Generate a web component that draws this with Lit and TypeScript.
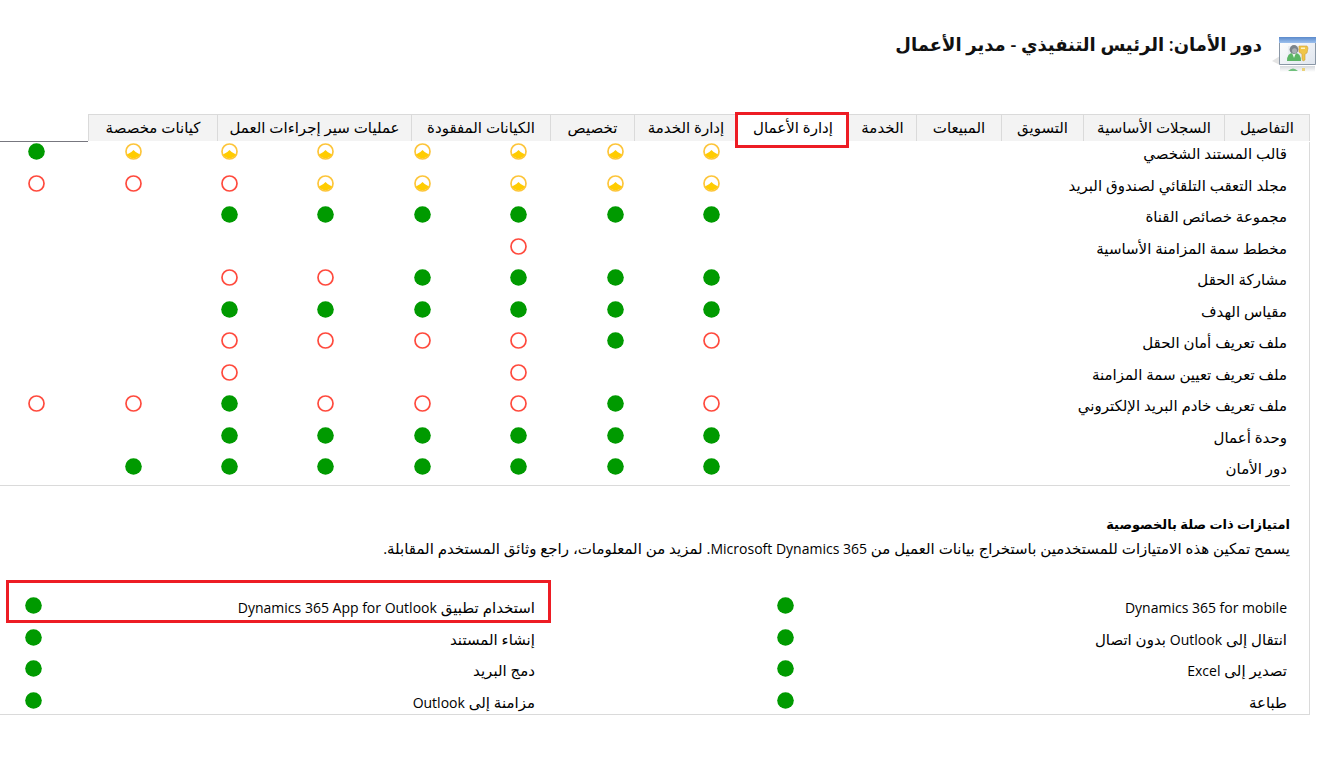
import { LitElement, html, css, svg, nothing } from "lit";
import { customElement, property, state } from "lit/decorators.js";
import { classMap } from "lit/directives/class-map.js";

type Level = "full" | "user" | "none";

const LEVEL_LABELS: Record<Level, string> = {
  full: "المؤسسة",
  user: "المستخدم",
  none: "بلا تحديد",
};

const LEVEL_CODES: Record<string, Level> = { g: "full", y: "user", r: "none" };

const TABS = [
  "التفاصيل",
  "السجلات الأساسية",
  "التسويق",
  "المبيعات",
  "الخدمة",
  "إدارة الأعمال",
  "إدارة الخدمة",
  "تخصيص",
  "الكيانات المفقودة",
  "عمليات سير إجراءات العمل",
  "كيانات مخصصة",
];

/* One letter per privilege column: g full, y user, r none, - not applicable. */
const ENTITIES: Array<[string, string]> = [
  ["قالب المستند الشخصي", "yyyyyyyg"],
  ["مجلد التعقب التلقائي لصندوق البريد", "yyyyyrrr"],
  ["مجموعة خصائص القناة", "gggggg--"],
  ["مخطط سمة المزامنة الأساسية", "--r-----"],
  ["مشاركة الحقل", "ggggrr--"],
  ["مقياس الهدف", "gggggg--"],
  ["ملف تعريف أمان الحقل", "rgrrrr--"],
  ["ملف تعريف تعيين سمة المزامنة", "--r--r--"],
  ["ملف تعريف خادم البريد الإلكتروني", "rgrrrgrr"],
  ["وحدة أعمال", "gggggg--"],
  ["دور الأمان", "ggggggg-"],
];

const latin = (text: string) => html`<span class="latin">${text}</span>`;

const PRIVACY = [
  [latin("Dynamics 365 for mobile"), html`استخدام تطبيق ${latin("Dynamics 365 App for Outlook")}`],
  [html`انتقال إلى ${latin("Outlook")} بدون اتصال`, html`إنشاء المستند`],
  [html`تصدير إلى ${latin("Excel")}`, html`دمج البريد`],
  [html`طباعة`, html`مزامنة إلى ${latin("Outlook")}`],
];

@customElement("access-level")
export class AccessLevel extends LitElement {
  static styles = css`
    :host {
      display: block;
      width: 17px;
      height: 17px;
    }
    .mark {
      display: block;
    }
  `;

  @property() level: Level = "none";

  render() {
    const shapes = {
      full: svg`<circle cx="8.5" cy="8.5" r="8.3" fill="#009a00"/>`,
      user: svg`<circle cx="8.5" cy="8.5" r="7.5" fill="#fff" stroke="#fdc53a" stroke-width="1.7"/>
        <path d="M8.5 7Q10.5 9.6 15 11.6A7.6 7.6 0 0 1 2 11.6Q6.5 9.6 8.5 7Z" fill="#fc0"/>`,
      none: svg`<circle cx="8.5" cy="8.5" r="7.5" fill="#fff" stroke="#ff4a3d" stroke-width="1.7"/>`,
    };
    return html`<svg class="mark" width="17" height="17" viewBox="0 0 17 17" role="img" aria-label=${LEVEL_LABELS[this.level]}>
      ${shapes[this.level]}
    </svg>`;
  }
}

@customElement("app-root")
export class AppRoot extends LitElement {
  static styles = css`
    :host {
      display: block;
      font-family: "Open Sans", "DejaVu Sans", sans-serif;
      font-size: 15px;
      line-height: 24px;
      color: #000;
      background: #fff;
    }
    .latin {
      font-size: 14px;
      line-height: 16px;
    }
    .header {
      display: flex;
      align-items: flex-start;
      gap: 10px;
      height: 86px;
      padding: 28px 8px 0;
      box-sizing: border-box;
    }
    .role-icon {
      flex: none;
      margin-top: 6px;
    }
    .title {
      margin: 0;
      font-size: 18px;
      line-height: 32px;
      font-weight: 600;
      color: #111;
    }
    .tab-row {
      display: grid;
      grid-template-columns: 86fr 141fr 82fr 85fr 68fr 111fr 103fr 84fr 139fr 194fr 129fr 88fr;
      height: 28px;
      margin-top: 28px;
      padding-right: 14px;
    }
    .tab {
      position: relative;
      height: 27px;
      padding: 0 0 2px;
      border: 0 solid #dadada;
      border-width: 1px 0 0 1px;
      background: #f3f3f3;
      font: inherit;
      line-height: 24px;
      color: #000;
      white-space: nowrap;
    }
    .tab:first-child {
      border-right-width: 1px;
    }
    .tab.selected {
      background: #fff;
    }
    .tab-mark {
      position: absolute;
      inset: -3px -1px -7px -3px;
      border: 3px solid #ed1c24;
      z-index: 1;
    }
    .tab-rest {
      border-bottom: 1px solid #77777f;
    }
    .panel {
      margin-right: 14px;
      padding-right: 19px;
      border: 0 solid #dadada;
      border-width: 0 1px 1px 0;
    }
    .grid {
      width: 100%;
      table-layout: fixed;
      border-collapse: collapse;
    }
    .entities {
      border-bottom: 1px solid #dadada;
    }
    .col-entity {
      width: 42.1%;
    }
    .col-level {
      width: 7.47%;
    }
    .col-label {
      width: 38.2%;
    }
    .col-value {
      width: 20.1%;
    }
    .row {
      height: 31px;
    }
    .row:nth-child(odd) {
      height: 32px;
    }
    .entities .row:last-child {
      height: 28px;
    }
    .privacy .row:last-child {
      height: 23px;
    }
    .name,
    .cell {
      padding: 1px 3px 0;
      vertical-align: top;
      text-align: start;
      font-weight: 400;
      white-space: nowrap;
      line-height: 20px;
    }
    .entities .cell {
      padding-inline-start: 27px;
    }
    .section-title {
      margin: 26px 0 0;
      font-size: 13px;
      line-height: 24px;
      font-weight: 700;
    }
    .section-text {
      margin: 0 0 36px;
    }
    .privacy {
      position: relative;
    }
    .privacy-mark {
      position: absolute;
      left: 6px;
      top: -16px;
      width: 42.25%;
      height: 43px;
      box-sizing: border-box;
      border: 3px solid #ed1c24;
      pointer-events: none;
    }
  `;

  @state() private selected = 5;

  private renderIcon() {
    return html`<svg class="role-icon" width="44" height="40" viewBox="0 0 44 40" aria-hidden="true">
      <defs>
        <linearGradient id="bar" x1="0" y1="0" x2="0" y2="1">
          <stop offset="0" stop-color="#5b8acb" />
          <stop offset="1" stop-color="#9cc0ee" />
        </linearGradient>
        <linearGradient id="pane" x1="0" y1="0" x2="1" y2="1">
          <stop offset="0" stop-color="#fff" />
          <stop offset="1" stop-color="#dfe5ee" />
        </linearGradient>
        <linearGradient id="fade" x1="0" y1="0" x2="0" y2="1">
          <stop offset="0" stop-color="#c3c8ce" />
          <stop offset="1" stop-color="#fff" />
        </linearGradient>
      </defs>
      <path d="M0 27 8 22v9Z" fill="#e4e4e4" />
      <path d="M8 32h35v6H8Z" fill="url(#fade)" opacity=".7" />
      <path d="M16 37q5-5 10 0Z" fill="#6fc07c" />
      <path d="M30 34h3v3h-3Z" fill="#ead27a" />
      <path d="M7.5 3.5h36v27h-36Z" fill="url(#pane)" stroke="#8a97a6" />
      <path d="M7 3h37v6H7Z" fill="url(#bar)" />
      <path d="M16 12h20v15H16Z" fill="#e9edf2" />
      <path d="M15 27q0-8 6-8h2q6 0 6 8Z" fill="#5cb665" />
      <path d="m20 19 2 5 2-5Z" fill="#e8f6e8" />
      <circle cx="22" cy="15.5" r="4.4" fill="#7b838a" />
      <circle cx="22.5" cy="16.8" r="2.5" fill="#a9afb4" />
      <path d="M27 12h8l1 2-1 5-2 1v6l-2 1-1-2v-5l-3-2Z" fill="#f0c548" stroke="#cfa038" stroke-width=".6" />
      <path d="M29 13.5h4v1.5h-4Z" fill="#fff3c0" />
    </svg>`;
  }

  private renderLevel(code: string) {
    const level = LEVEL_CODES[code];
    return level ? html`<access-level .level=${level}></access-level>` : nothing;
  }

  render() {
    return html`<main dir="rtl" lang="ar">
      <header class="header">
        ${this.renderIcon()}
        <h1 class="title">دور الأمان: الرئيس التنفيذي - مدير الأعمال</h1>
      </header>
      <div class="tab-row" role="tablist">
        ${TABS.map(
          (label, i) => html`<button
            class=${classMap({ tab: true, selected: i === this.selected })}
            role="tab"
            aria-selected=${i === this.selected ? "true" : "false"}
            @click=${() => (this.selected = i)}
          >${label}${i === this.selected ? html`<span class="tab-mark"></span>` : nothing}</button>`
        )}
        <span class="tab-rest" role="presentation"></span>
      </div>
      <section class="panel">
        <table class="grid entities">
          <colgroup>
            <col class="col-entity" />
            <col class="col-level" span="7" />
            <col />
          </colgroup>
          <tbody>
            ${ENTITIES.map(
              ([name, levels]) => html`<tr class="row">
                <th class="name" scope="row">${name}</th>
                ${[...levels].map((code) => html`<td class="cell">${this.renderLevel(code)}</td>`)}
              </tr>`
            )}
          </tbody>
        </table>
        <h2 class="section-title">امتيازات ذات صلة بالخصوصية</h2>
        <p class="section-text">يسمح تمكين هذه الامتيازات للمستخدمين باستخراج بيانات العميل من ${latin("Microsoft Dynamics 365")}. لمزيد من المعلومات، راجع وثائق المستخدم المقابلة.</p>
        <div class="privacy">
          <table class="grid">
            <colgroup>
              <col class="col-label" />
              <col class="col-value" />
              <col class="col-label" />
              <col />
            </colgroup>
            <tbody>
              ${PRIVACY.map(
                (pair) => html`<tr class="row">
                  ${pair.map(
                    (name) => html`<th class="name" scope="row">${name}</th>
                      <td class="cell">${this.renderLevel("g")}</td>`
                  )}
                </tr>`
              )}
            </tbody>
          </table>
          <span class="privacy-mark"></span>
        </div>
      </section>
    </main>`;
  }
}
